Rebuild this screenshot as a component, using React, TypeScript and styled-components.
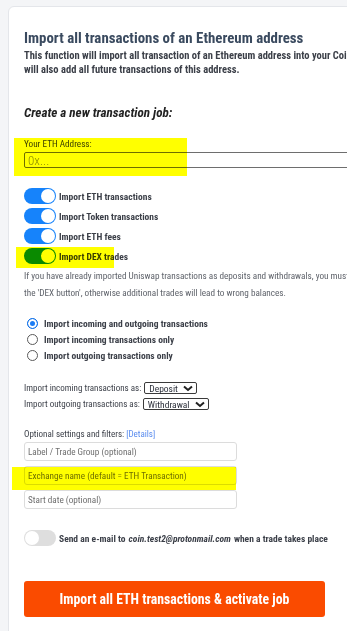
import styled, { createGlobalStyle } from "styled-components";

const FONT = `Roboto, "Liberation Sans", Arial, sans-serif`;

const GlobalStyle = createGlobalStyle`
  html, body {
    margin: 0;
    padding: 0;
    background: #f4f5f7;
    overflow: hidden;
  }
  body {
    font-family: ${FONT};
    font-stretch: 75%;
  }
  * {
    box-sizing: border-box;
  }
  input, button {
    font-family: inherit;
    font-stretch: inherit;
  }
`;

const Page = styled.div`
  padding: 6px 0 0 8px;
  width: 620px;
`;

const Card = styled.div`
  width: 500px;
  background: #fff;
  border: 1px solid #e4e6ea;
  border-radius: 6px;
  padding: 22px 16px 40px 15px;
`;

const Title = styled.h1`
  margin: 0;
  font-size: 14.9px;
  line-height: 19px;
  font-weight: bold;
  color: #3a4a5f;
`;

const Intro = styled.p`
  margin: 1px 0 0;
  font-size: 10.5px;
  line-height: 14px;
  font-weight: bold;
  color: #3b3f48;
  white-space: nowrap;
`;

const SubHeading = styled.h3`
  margin: 28px 0 0;
  font-size: 13.1px;
  line-height: 15px;
  font-weight: bold;
  font-style: italic;
  color: #222;
`;

// yellow marker drawn over the content
const Marker = styled.span<{ $l: number; $t: number; $w: number; $h: number }>`
  position: absolute;
  left: ${(p) => p.$l}px;
  top: ${(p) => p.$t}px;
  width: ${(p) => p.$w}px;
  height: ${(p) => p.$h}px;
  background: #ffff00;
  mix-blend-mode: multiply;
  pointer-events: none;
`;

const FieldGroup = styled.div`
  position: relative;
  margin-top: 18px;
`;

const SmallLabel = styled.div`
  font-size: 9.2px;
  line-height: 12px;
  color: #3b3f48;
  margin-bottom: 2px;
`;

const AddressInput = styled.input`
  display: block;
  width: 420px;
  height: 16px;
  border: 1px solid #6e6e6e;
  border-radius: 2px;
  padding: 0 3px;
  font-size: 13px;
  font-weight: 300;
  background: #fff;
  &::placeholder {
    color: #8c8c8c;
  }
`;

const ToggleList = styled.div`
  margin-top: 20px;
  display: flex;
  flex-direction: column;
  gap: 4px;
`;

const ToggleRow = styled.label`
  position: relative;
  display: flex;
  align-items: center;
  gap: 3px;
  height: 16px;
  font-size: 9.5px;
  font-weight: bold;
  color: #3b3f48;
  white-space: nowrap;
`;

const Track = styled.span<{ $on: boolean; $color?: string }>`
  position: relative;
  flex: none;
  width: 32px;
  height: 16px;
  border-radius: 8px;
  background: ${(p) => (p.$on ? p.$color || "#1683fb" : "#dedede")};
  &::after {
    content: "";
    position: absolute;
    top: 1px;
    left: ${(p) => (p.$on ? "17px" : "1px")};
    width: 14px;
    height: 14px;
    border-radius: 50%;
    background: #fff;
  }
`;

const Note = styled.p`
  margin: 3px 0 0;
  font-size: 9.2px;
  line-height: 17px;
  color: #5f636b;
  white-space: nowrap;
`;

const RadioList = styled.div`
  margin-top: 14px;
  display: flex;
  flex-direction: column;
`;

const RadioRow = styled.label`
  display: flex;
  align-items: center;
  gap: 6px;
  height: 16px;
  padding-left: 3px;
  font-size: 9.5px;
  font-weight: bold;
  color: #3b3f48;
  white-space: nowrap;
`;

const RadioDot = styled.span<{ $checked: boolean }>`
  flex: none;
  width: 11px;
  height: 11px;
  border-radius: 50%;
  border: 1px solid ${(p) => (p.$checked ? "#0f6fe6" : "#5a5a5a")};
  background: ${(p) => (p.$checked ? "#1a7cf5" : "#fff")};
  box-shadow: ${(p) => (p.$checked ? "inset 0 0 0 2px #fff" : "none")};
`;

const SelectRows = styled.div`
  margin-top: 17px;
  display: flex;
  flex-direction: column;
`;

const SelectRow = styled.div`
  display: flex;
  align-items: center;
  gap: 3px;
  height: 16px;
  font-size: 9px;
  color: #3b3f48;
  white-space: nowrap;
`;

const SelectBox = styled.span`
  display: inline-flex;
  align-items: center;
  gap: 5px;
  height: 12px;
  padding: 0 3px 0 4px;
  border: 1px solid #3a3a3a;
  border-radius: 2px;
  font-size: 9.5px;
  color: #2b2f3a;
`;

const OptionalLabel = styled.div`
  margin-top: 15px;
  font-size: 9px;
  line-height: 14px;
  color: #3b3f48;
`;

const DetailsLink = styled.a`
  color: #5b8def;
  text-decoration: none;
`;

const OptionalInputs = styled.div`
  margin-top: 1px;
  display: flex;
  flex-direction: column;
  gap: 5px;
`;

const InputWrap = styled.div`
  position: relative;
`;

const TextInput = styled.input`
  display: block;
  width: 213px;
  height: 19px;
  border: 1px solid #dcdcdc;
  border-radius: 3px;
  padding: 0 3px;
  font-size: 9.2px;
  background: #fff;
  &::placeholder {
    color: #6f6f6f;
  }
`;

const EmailRow = styled(ToggleRow)`
  margin-top: 21px;
`;

const SubmitButton = styled.button`
  display: block;
  margin-top: 35px;
  width: 301px;
  height: 36px;
  border: none;
  border-radius: 3px;
  background: #fa4b00;
  color: #fff;
  font-size: 13.8px;
  font-weight: bold;
  cursor: pointer;
`;

const Chevron = () => (
  <svg width="10" height="7" viewBox="0 0 10 7">
    <path d="M1 1.5 L5 5 L9 1.5" fill="none" stroke="#222" strokeWidth="2" />
  </svg>
);

const toggles = [
  { label: "Import ETH transactions", on: true },
  { label: "Import Token transactions", on: true },
  { label: "Import ETH fees", on: true },
];

const radios = [
  { label: "Import incoming and outgoing transactions", checked: true },
  { label: "Import incoming transactions only", checked: false },
  { label: "Import outgoing transactions only", checked: false },
];

function App() {
  return (
    <>
      <GlobalStyle />
      <Page>
        <Card>
          <Title>Import all transactions of an Ethereum address</Title>
          <Intro>
            This function will import all transaction of an Ethereum address into your CoinTracking account. It
            <br />
            will also add all future transactions of this address.
          </Intro>

          <SubHeading>Create a new transaction job:</SubHeading>

          <FieldGroup>
            <SmallLabel>Your ETH Address:</SmallLabel>
            <AddressInput placeholder="0x..." />
            <Marker $l={-10} $t={0} $w={173} $h={38} />
          </FieldGroup>

          <ToggleList>
            {toggles.map((t) => (
              <ToggleRow key={t.label}>
                <Track $on={t.on} />
                {t.label}
              </ToggleRow>
            ))}
            <ToggleRow>
              <Track $on $color="#0a8a0a" />
              Import DEX trades
              <Marker $l={-8} $t={-1} $w={98} $h={21} />
            </ToggleRow>
          </ToggleList>

          <Note>
            If you have already imported Uniswap transactions as deposits and withdrawals, you must delete them before activating
            <br />
            the 'DEX button', otherwise additional trades will lead to wrong balances.
          </Note>

          <RadioList>
            {radios.map((r) => (
              <RadioRow key={r.label}>
                <RadioDot $checked={r.checked} />
                {r.label}
              </RadioRow>
            ))}
          </RadioList>

          <SelectRows>
            <SelectRow>
              Import incoming transactions as:
              <SelectBox>
                Deposit <Chevron />
              </SelectBox>
            </SelectRow>
            <SelectRow>
              Import outgoing transactions as:
              <SelectBox>
                Withdrawal <Chevron />
              </SelectBox>
            </SelectRow>
          </SelectRows>

          <OptionalLabel>
            Optional settings and filters: <DetailsLink href="#">[Details]</DetailsLink>
          </OptionalLabel>
          <OptionalInputs>
            <TextInput placeholder="Label / Trade Group (optional)" />
            <InputWrap>
              <TextInput placeholder="Exchange name (default = ETH Transaction)" />
              <Marker $l={-12} $t={1} $w={224} $h={23} />
            </InputWrap>
            <TextInput placeholder="Start date (optional)" />
          </OptionalInputs>

          <EmailRow>
            <Track $on={false} />
            Send an e-mail to <em>coin.test2@protonmail.com</em> when a trade takes place
          </EmailRow>

          <SubmitButton>Import all ETH transactions &amp; activate job</SubmitButton>
        </Card>
      </Page>
    </>
  );
}

export default App;
